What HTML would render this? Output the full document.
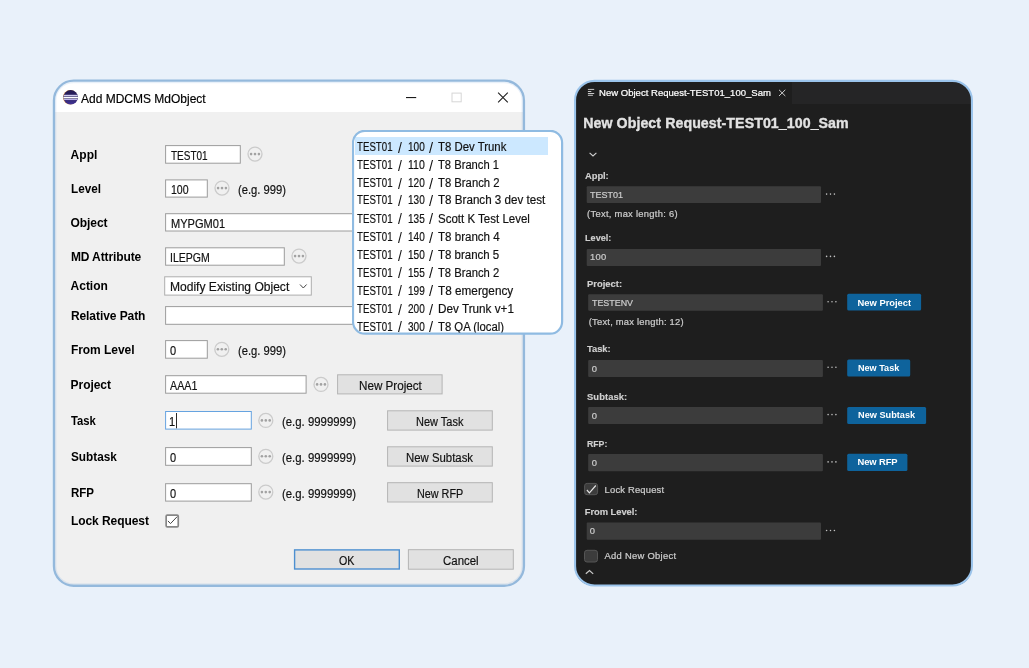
<!DOCTYPE html>
<html lang="en">
<head>
<meta charset="utf-8">
<title>Add MDCMS MdObject</title>
<style>
*{box-sizing:border-box;margin:0;padding:0}
html,body{width:1029px;height:668px;overflow:hidden;background:#e9f1fa}
body{position:relative;font-family:"Liberation Sans",sans-serif}
.layer{position:absolute;left:0;top:0;width:1029px;height:668px}
.g{will-change:opacity}
#dlg{position:absolute;left:54px;top:81px;width:470px;height:505px;border-radius:19px;background:#f0f0f0;overflow:hidden}
#dlg .tbar{position:absolute;left:0;top:0;width:100%;height:31px;background:#ffffff}
#pop{position:absolute;left:353px;top:131px;width:209px;height:203px;border-radius:11.5px;background:#ffffff;overflow:hidden}
#popf{position:absolute;left:352px;top:130px}
#popt{position:absolute;left:353px;top:131px;width:209px;height:202px;overflow:hidden}
#pop .sel{position:absolute;left:2px;top:6px;width:193px;height:18px;background:#cce8ff}
#vs{position:absolute;left:575px;top:81px;width:397px;height:505px;border-radius:19px;background:#1e1e1e;overflow:hidden}
#vs .tabs{position:absolute;left:0;top:0;width:100%;height:23px;background:#252526}
#vs .tab{position:absolute;left:0;top:0;width:217px;height:23px;background:#1e1e1e}
.x{position:absolute;white-space:pre;line-height:16px;height:16px;transform-origin:0 0}
.t{font-size:12px;font-weight:normal;color:#000000}
.lb{font-size:12px;font-weight:bold;color:#000000}
.w{font-size:12px;font-weight:normal;color:#111111}
.sl{font-size:14.6px;font-weight:normal;color:#111111}
.vt{font-size:9.5px;font-weight:normal;color:#ffffff}
.h1{font-size:14.2px;font-weight:bold;color:#e2e2e2}
.vb{font-size:9.4px;font-weight:bold;color:#d0d0d0}
.v{font-size:9.4px;font-weight:normal;color:#cccccc}
.vw{font-size:9.4px;font-weight:bold;color:#ffffff}
.w,.t{-webkit-text-stroke:0.18px currentColor}
.v,.vt{-webkit-text-stroke:0.22px currentColor}
.vb{-webkit-text-stroke:0.15px currentColor}
.h1{-webkit-text-stroke:0.35px currentColor}
</style>
</head>
<body>
<!-- left: Windows dialog -->
<div id="dlg"><div class="tbar"></div></div>
<!-- right: VS Code panel -->
<div id="vs"><div class="tabs"></div><div class="tab"></div></div>
<svg class="layer" width="1029" height="668" viewBox="0 0 1029 668">
<rect x="53.95" y="80.65" width="470.00" height="505.10" rx="19.8" fill="none" stroke="#94b9dc" stroke-width="2.3"/>
<rect x="55.70" y="82.50" width="466.50" height="501.40" rx="17.6" fill="none" stroke="rgba(140,178,225,0.2)" stroke-width="1.4"/>
<rect x="575.05" y="80.85" width="396.90" height="504.60" rx="19.5" fill="none" stroke="#9bc4eb" stroke-width="2.1"/>
<rect x="165.60" y="145.60" width="74.70" height="17.60" rx="0" fill="#ffffff" stroke="#9c9c9c" stroke-width="1" />
<rect x="165.60" y="179.90" width="41.70" height="17.20" rx="0" fill="#ffffff" stroke="#9c9c9c" stroke-width="1" />
<rect x="165.60" y="213.70" width="303.90" height="17.30" rx="0" fill="#ffffff" stroke="#9c9c9c" stroke-width="1" />
<rect x="165.60" y="247.80" width="118.70" height="17.40" rx="0" fill="#ffffff" stroke="#9c9c9c" stroke-width="1" />
<rect x="165.60" y="306.60" width="303.90" height="17.70" rx="0" fill="#ffffff" stroke="#9c9c9c" stroke-width="1" />
<rect x="165.60" y="340.60" width="41.70" height="17.60" rx="0" fill="#ffffff" stroke="#9c9c9c" stroke-width="1" />
<rect x="165.60" y="375.70" width="140.50" height="17.50" rx="0" fill="#ffffff" stroke="#9c9c9c" stroke-width="1" />
<rect x="165.60" y="447.60" width="85.70" height="17.70" rx="0" fill="#ffffff" stroke="#9c9c9c" stroke-width="1" />
<rect x="165.60" y="483.70" width="85.70" height="17.40" rx="0" fill="#ffffff" stroke="#9c9c9c" stroke-width="1" />
<rect x="164.70" y="276.80" width="146.60" height="18.30" rx="0" fill="#ffffff" stroke="#adadad" stroke-width="1" />
<rect x="165.60" y="411.50" width="85.70" height="17.60" rx="0" fill="#ffffff" stroke="#66a3e0" stroke-width="1" />
<rect x="176.05" y="413" width="0.9" height="15.3" fill="#111"/>
<path d="M300 284.5 L303.3 288 L306.6 284.5" stroke="#444" stroke-width="1" fill="none"/>
<circle cx="255" cy="154.10000000000002" r="7" fill="none" stroke="#cbcbcb" stroke-width="1.3"/>
<circle cx="251.1" cy="154.10000000000002" r="1.3" fill="#a2a2a2"/>
<circle cx="255.0" cy="154.10000000000002" r="1.3" fill="#a2a2a2"/>
<circle cx="258.9" cy="154.10000000000002" r="1.3" fill="#a2a2a2"/>
<circle cx="222" cy="188.10000000000002" r="7" fill="none" stroke="#cbcbcb" stroke-width="1.3"/>
<circle cx="218.1" cy="188.10000000000002" r="1.3" fill="#a2a2a2"/>
<circle cx="222.0" cy="188.10000000000002" r="1.3" fill="#a2a2a2"/>
<circle cx="225.9" cy="188.10000000000002" r="1.3" fill="#a2a2a2"/>
<circle cx="299" cy="256.1" r="7" fill="none" stroke="#cbcbcb" stroke-width="1.3"/>
<circle cx="295.1" cy="256.1" r="1.3" fill="#a2a2a2"/>
<circle cx="299.0" cy="256.1" r="1.3" fill="#a2a2a2"/>
<circle cx="302.9" cy="256.1" r="1.3" fill="#a2a2a2"/>
<circle cx="221.8" cy="349.3" r="7" fill="none" stroke="#cbcbcb" stroke-width="1.3"/>
<circle cx="217.9" cy="349.3" r="1.3" fill="#a2a2a2"/>
<circle cx="221.8" cy="349.3" r="1.3" fill="#a2a2a2"/>
<circle cx="225.7" cy="349.3" r="1.3" fill="#a2a2a2"/>
<circle cx="321" cy="384.40000000000003" r="7" fill="none" stroke="#cbcbcb" stroke-width="1.3"/>
<circle cx="317.1" cy="384.40000000000003" r="1.3" fill="#a2a2a2"/>
<circle cx="321.0" cy="384.40000000000003" r="1.3" fill="#a2a2a2"/>
<circle cx="324.9" cy="384.40000000000003" r="1.3" fill="#a2a2a2"/>
<circle cx="265.8" cy="420.40000000000003" r="7" fill="none" stroke="#cbcbcb" stroke-width="1.3"/>
<circle cx="261.9" cy="420.40000000000003" r="1.3" fill="#a2a2a2"/>
<circle cx="265.8" cy="420.40000000000003" r="1.3" fill="#a2a2a2"/>
<circle cx="269.7" cy="420.40000000000003" r="1.3" fill="#a2a2a2"/>
<circle cx="265.8" cy="456.3" r="7" fill="none" stroke="#cbcbcb" stroke-width="1.3"/>
<circle cx="261.9" cy="456.3" r="1.3" fill="#a2a2a2"/>
<circle cx="265.8" cy="456.3" r="1.3" fill="#a2a2a2"/>
<circle cx="269.7" cy="456.3" r="1.3" fill="#a2a2a2"/>
<circle cx="265.8" cy="492.1" r="7" fill="none" stroke="#cbcbcb" stroke-width="1.3"/>
<circle cx="261.9" cy="492.1" r="1.3" fill="#a2a2a2"/>
<circle cx="265.8" cy="492.1" r="1.3" fill="#a2a2a2"/>
<circle cx="269.7" cy="492.1" r="1.3" fill="#a2a2a2"/>
<rect x="337.60" y="374.80" width="104.50" height="19.10" rx="0" fill="#e1e1e1" stroke="#b4b4b4" stroke-width="1" />
<rect x="387.60" y="410.80" width="104.70" height="19.30" rx="0" fill="#e1e1e1" stroke="#b4b4b4" stroke-width="1" />
<rect x="387.60" y="446.80" width="104.70" height="19.30" rx="0" fill="#e1e1e1" stroke="#b4b4b4" stroke-width="1" />
<rect x="387.60" y="482.70" width="104.70" height="19.30" rx="0" fill="#e1e1e1" stroke="#b4b4b4" stroke-width="1" />
<rect x="408.40" y="549.70" width="104.90" height="19.50" rx="0" fill="#e1e1e1" stroke="#b4b4b4" stroke-width="1" />
<rect x="294.60" y="549.90" width="104.70" height="19.10" rx="0" fill="#e1e1e1" stroke="#4d8fd0" stroke-width="1.4" />
<rect x="166.15" y="515.15" width="12.10" height="11.70" rx="1.2" fill="#ffffff" stroke="#868686" stroke-width="1.7" />
<path d="M167.9 520.9 L170.5 523.6 L177.2 516.6" stroke="#444" stroke-width="1" fill="none"/>
<rect x="406" y="97" width="10.2" height="1.1" fill="#1a1a1a"/>
<rect x="452.00" y="93.10" width="9.20" height="8.70" rx="0" fill="none" stroke="#d6d6d6" stroke-width="1" />
<path d="M498.1 92.7 L507.8 102.3 M507.8 92.7 L498.1 102.3" stroke="#1a1a1a" stroke-width="1.05" fill="none"/>
<defs><linearGradient id="ecg" x1="0" y1="0" x2="0" y2="1"><stop offset="0" stop-color="#231a52"/><stop offset="0.55" stop-color="#2c2266"/><stop offset="1" stop-color="#43369a"/></linearGradient>
<clipPath id="ecc"><circle cx="70.7" cy="97.3" r="7.2"/></clipPath></defs>
<g>
<circle cx="70.2" cy="97.3" r="7.2" fill="#f0a040"/>
<circle cx="70.7" cy="97.3" r="7.2" fill="url(#ecg)"/>
<g clip-path="url(#ecc)">
<rect x="62" y="94.85" width="17" height="5.2" fill="#6a6392"/>
<rect x="62" y="94.85" width="17" height="1.15" fill="#cfcaee"/>
<rect x="62" y="96.95" width="17" height="1.25" fill="#ffffff"/>
<rect x="62" y="99" width="17" height="1.05" fill="#bbb2ea"/>
</g>
</g>
<rect x="586.70" y="186.20" width="234.30" height="16.70" rx="1" fill="#3c3c3c" />
<rect x="586.70" y="249.00" width="234.30" height="17.00" rx="1" fill="#3c3c3c" />
<rect x="588.20" y="294.30" width="234.70" height="16.50" rx="1" fill="#3c3c3c" />
<rect x="588.20" y="359.90" width="234.70" height="17.10" rx="1" fill="#3c3c3c" />
<rect x="588.20" y="407.10" width="234.70" height="16.90" rx="1" fill="#3c3c3c" />
<rect x="588.20" y="454.10" width="234.70" height="17.10" rx="1" fill="#3c3c3c" />
<rect x="586.70" y="522.60" width="234.30" height="17.20" rx="1" fill="#3c3c3c" />
<circle cx="826.60" cy="194.1" r="0.78" fill="#c2c2c2"/>
<circle cx="830.50" cy="194.1" r="0.78" fill="#c2c2c2"/>
<circle cx="834.40" cy="194.1" r="0.78" fill="#c2c2c2"/>
<circle cx="826.60" cy="256.4" r="0.78" fill="#c2c2c2"/>
<circle cx="830.50" cy="256.4" r="0.78" fill="#c2c2c2"/>
<circle cx="834.40" cy="256.4" r="0.78" fill="#c2c2c2"/>
<circle cx="828.10" cy="301.8" r="0.78" fill="#c2c2c2"/>
<circle cx="832.00" cy="301.8" r="0.78" fill="#c2c2c2"/>
<circle cx="835.90" cy="301.8" r="0.78" fill="#c2c2c2"/>
<circle cx="828.10" cy="367.2" r="0.78" fill="#c2c2c2"/>
<circle cx="832.00" cy="367.2" r="0.78" fill="#c2c2c2"/>
<circle cx="835.90" cy="367.2" r="0.78" fill="#c2c2c2"/>
<circle cx="828.10" cy="414.6" r="0.78" fill="#c2c2c2"/>
<circle cx="832.00" cy="414.6" r="0.78" fill="#c2c2c2"/>
<circle cx="835.90" cy="414.6" r="0.78" fill="#c2c2c2"/>
<circle cx="828.10" cy="461.9" r="0.78" fill="#c2c2c2"/>
<circle cx="832.00" cy="461.9" r="0.78" fill="#c2c2c2"/>
<circle cx="835.90" cy="461.9" r="0.78" fill="#c2c2c2"/>
<circle cx="826.60" cy="530.5" r="0.78" fill="#c2c2c2"/>
<circle cx="830.50" cy="530.5" r="0.78" fill="#c2c2c2"/>
<circle cx="834.40" cy="530.5" r="0.78" fill="#c2c2c2"/>
<rect x="847.20" y="293.70" width="73.90" height="16.70" rx="1.5" fill="#0e639c" />
<rect x="847.20" y="359.40" width="63.00" height="17.10" rx="1.5" fill="#0e639c" />
<rect x="847.20" y="407.00" width="78.90" height="17.10" rx="1.5" fill="#0e639c" />
<rect x="847.20" y="453.80" width="60.20" height="17.20" rx="1.5" fill="#0e639c" />
<rect x="584.60" y="483.40" width="13.00" height="11.30" rx="2.5" fill="#3c3c3c" stroke="#555555" stroke-width="1" />
<path d="M586.9 490 L589.4 492.8 L595.8 485.5" stroke="#e4e4e4" stroke-width="1.15" fill="none"/>
<rect x="584.50" y="550.30" width="13.00" height="11.70" rx="2.5" fill="#3c3c3c" stroke="#555555" stroke-width="1" />
<path d="M589.6 152.8 L593 156 L596.4 152.8" stroke="#d0d0d0" stroke-width="1.15" fill="none"/>
<path d="M585.8 573.7 L589.5 570.5 L593.2 573.9" stroke="#c8c8c8" stroke-width="1.25" fill="none"/>
<rect x="587.9" y="88.90" width="6.30" height="1" fill="#c5c5c5"/>
<rect x="587.9" y="91.00" width="3.40" height="1" fill="#c5c5c5"/>
<rect x="587.9" y="93.00" width="6.30" height="1" fill="#c5c5c5"/>
<rect x="587.9" y="94.80" width="5.00" height="1" fill="#c5c5c5"/>
<path d="M779 89.8 L785.3 96 M785.3 89.8 L779 96" stroke="#d4d4d4" stroke-width="0.95" fill="none"/>
</svg>
<div class="layer g">
<span class="x t" style="left:80.70px;top:91.00px;transform:scaleX(0.9995)">Add MDCMS MdObject</span>
<span class="x lb" style="left:70.60px;top:147.00px;letter-spacing:0.025px">Appl</span>
<span class="x lb" style="left:70.90px;top:181.00px;transform:scaleX(0.9752)">Level</span>
<span class="x lb" style="left:70.60px;top:215.00px;letter-spacing:-0.089px">Object</span>
<span class="x lb" style="left:70.90px;top:249.00px;letter-spacing:-0.110px">MD Attribute</span>
<span class="x lb" style="left:70.60px;top:278.00px;letter-spacing:-0.020px">Action</span>
<span class="x lb" style="left:70.90px;top:308.00px;letter-spacing:-0.069px">Relative Path</span>
<span class="x lb" style="left:70.90px;top:342.00px;letter-spacing:-0.043px">From Level</span>
<span class="x lb" style="left:70.60px;top:377.00px;letter-spacing:-0.048px">Project</span>
<span class="x lb" style="left:71.20px;top:413.00px;transform:scaleX(0.9370)">Task</span>
<span class="x lb" style="left:70.60px;top:449.00px;transform:scaleX(0.9828)">Subtask</span>
<span class="x lb" style="left:70.90px;top:485.00px;transform:scaleX(0.9585)">RFP</span>
<span class="x lb" style="left:70.90px;top:513.00px;letter-spacing:-0.054px">Lock Request</span>
<span class="x w" style="left:170.60px;top:148.00px;transform:scaleX(0.8322)">TEST01</span>
<span class="x w" style="left:171.20px;top:182.00px;transform:scaleX(0.8797)">100</span>
<span class="x w" style="left:170.60px;top:216.00px;transform:scaleX(0.9219)">MYPGM01</span>
<span class="x w" style="left:169.72px;top:250.00px;transform:scaleX(0.8771)">ILEPGM</span>
<span class="x w" style="left:169.60px;top:279.00px;transform:scaleX(1.0044)">Modify Existing Object</span>
<span class="x w" style="left:169.83px;top:343.00px;transform:scaleX(0.9200)">0</span>
<span class="x w" style="left:170.10px;top:378.00px;transform:scaleX(0.8932)">AAA1</span>
<span class="x w" style="left:169.48px;top:414.00px;transform:scaleX(0.9200)">1</span>
<span class="x w" style="left:169.83px;top:450.00px;transform:scaleX(0.9200)">0</span>
<span class="x w" style="left:169.83px;top:486.00px;transform:scaleX(0.9200)">0</span>
<span class="x w" style="left:237.80px;top:182.00px;transform:scaleX(0.9344)">(e.g. 999)</span>
<span class="x w" style="left:237.80px;top:343.00px;transform:scaleX(0.9344)">(e.g. 999)</span>
<span class="x w" style="left:282.00px;top:414.00px;transform:scaleX(0.9480)">(e.g. 9999999)</span>
<span class="x w" style="left:282.00px;top:450.00px;transform:scaleX(0.9480)">(e.g. 9999999)</span>
<span class="x w" style="left:282.00px;top:486.00px;transform:scaleX(0.9480)">(e.g. 9999999)</span>
<span class="x w" style="left:358.60px;top:378.00px;transform:scaleX(0.9716)">New Project</span>
<span class="x w" style="left:415.60px;top:414.00px;transform:scaleX(0.9149)">New Task</span>
<span class="x w" style="left:406.20px;top:450.00px;transform:scaleX(0.9484)">New Subtask</span>
<span class="x w" style="left:417.00px;top:486.00px;transform:scaleX(0.9000)">New RFP</span>
<span class="x w" style="left:339.10px;top:553.00px;transform:scaleX(0.8884)">OK</span>
<span class="x w" style="left:443.10px;top:553.00px;transform:scaleX(0.9540)">Cancel</span>
<span class="x vt" style="left:599.00px;top:84.50px;letter-spacing:0.026px">New Object Request-TEST01_100_Sam</span>
<span class="x h1" style="left:583.20px;top:115.00px;letter-spacing:0.067px">New Object Request-TEST01_100_Sam</span>
<span class="x vb" style="left:585.10px;top:167.50px;letter-spacing:-0.107px">Appl:</span>
<span class="x v" style="left:590.10px;top:186.50px;transform:scaleX(0.9598)">TEST01</span>
<span class="x v" style="left:587.10px;top:205.50px;letter-spacing:0.275px">(Text, max length: 6)</span>
<span class="x vb" style="left:585.10px;top:229.50px;transform:scaleX(0.9713)">Level:</span>
<span class="x v" style="left:590.10px;top:248.50px;letter-spacing:0.286px">100</span>
<span class="x vb" style="left:587.00px;top:275.50px;letter-spacing:0.031px">Project:</span>
<span class="x v" style="left:592.10px;top:294.50px;transform:scaleX(0.9481)">TESTENV</span>
<span class="x v" style="left:588.70px;top:313.50px;letter-spacing:0.228px">(Text, max length: 12)</span>
<span class="x vb" style="left:587.10px;top:340.50px;letter-spacing:-0.068px">Task:</span>
<span class="x v" style="left:591.80px;top:360.50px;letter-spacing:0.000px">0</span>
<span class="x vb" style="left:587.00px;top:388.50px;letter-spacing:0.090px">Subtask:</span>
<span class="x v" style="left:591.80px;top:407.50px;letter-spacing:0.000px">0</span>
<span class="x vb" style="left:587.00px;top:435.50px;transform:scaleX(0.9287)">RFP:</span>
<span class="x v" style="left:591.80px;top:454.50px;letter-spacing:0.000px">0</span>
<span class="x v" style="left:604.60px;top:481.50px;letter-spacing:0.198px">Lock Request</span>
<span class="x vb" style="left:584.80px;top:503.50px;letter-spacing:-0.052px">From Level:</span>
<span class="x v" style="left:589.80px;top:522.50px;letter-spacing:0.000px">0</span>
<span class="x v" style="left:604.50px;top:547.50px;letter-spacing:0.290px">Add New Object</span>
<span class="x vw" style="left:857.60px;top:294.50px;letter-spacing:-0.014px">New Project</span>
<span class="x vw" style="left:857.60px;top:359.50px;transform:scaleX(0.9691)">New Task</span>
<span class="x vw" style="left:857.60px;top:406.50px;transform:scaleX(0.9791)">New Subtask</span>
<span class="x vw" style="left:857.60px;top:453.50px;letter-spacing:-0.113px">New RFP</span>
</div>
<!-- popup list -->
<div id="pop"><div class="sel"></div></div>
<div id="popt" class="g">
<div><span class="x w" style="left:3.60px;top:8.00px;transform:scaleX(0.8074)">TEST01 </span><span class="x sl" style="left:44.80px;top:9.00px;transform:scaleX(0.9600)">/ </span><span class="x w" style="left:54.50px;top:8.00px;transform:scaleX(0.8355)">100 </span><span class="x sl" style="left:75.90px;top:9.00px;transform:scaleX(1.0000)">/ </span><span class="x w" style="left:84.70px;top:8.00px;transform:scaleX(0.9489)">T8 Dev Trunk</span></div>
<div><span class="x w" style="left:3.60px;top:26.00px;transform:scaleX(0.8074)">TEST01 </span><span class="x sl" style="left:44.80px;top:27.00px;transform:scaleX(0.9600)">/ </span><span class="x w" style="left:54.50px;top:26.00px;transform:scaleX(0.8737)">110 </span><span class="x sl" style="left:75.90px;top:27.00px;transform:scaleX(1.0000)">/ </span><span class="x w" style="left:84.70px;top:26.00px;transform:scaleX(0.9331)">T8 Branch 1</span></div>
<div><span class="x w" style="left:3.60px;top:44.00px;transform:scaleX(0.8074)">TEST01 </span><span class="x sl" style="left:44.80px;top:45.00px;transform:scaleX(0.9600)">/ </span><span class="x w" style="left:54.50px;top:44.00px;transform:scaleX(0.8355)">120 </span><span class="x sl" style="left:75.90px;top:45.00px;transform:scaleX(1.0000)">/ </span><span class="x w" style="left:84.70px;top:44.00px;transform:scaleX(0.9407)">T8 Branch 2</span></div>
<div><span class="x w" style="left:3.60px;top:61.00px;transform:scaleX(0.8074)">TEST01 </span><span class="x sl" style="left:44.80px;top:62.00px;transform:scaleX(0.9600)">/ </span><span class="x w" style="left:54.50px;top:61.00px;transform:scaleX(0.8355)">130 </span><span class="x sl" style="left:75.90px;top:62.00px;transform:scaleX(1.0000)">/ </span><span class="x w" style="left:84.70px;top:61.00px;transform:scaleX(0.9687)">T8 Branch 3 dev test</span></div>
<div><span class="x w" style="left:3.60px;top:80.00px;transform:scaleX(0.8074)">TEST01 </span><span class="x sl" style="left:44.80px;top:80.00px;transform:scaleX(0.9600)">/ </span><span class="x w" style="left:54.50px;top:80.00px;transform:scaleX(0.8355)">135 </span><span class="x sl" style="left:75.90px;top:80.00px;transform:scaleX(1.0000)">/ </span><span class="x w" style="left:84.70px;top:80.00px;transform:scaleX(0.9593)">Scott K Test Level</span></div>
<div><span class="x w" style="left:3.60px;top:98.00px;transform:scaleX(0.8074)">TEST01 </span><span class="x sl" style="left:44.80px;top:99.00px;transform:scaleX(0.9600)">/ </span><span class="x w" style="left:54.50px;top:98.00px;transform:scaleX(0.8355)">140 </span><span class="x sl" style="left:75.90px;top:99.00px;transform:scaleX(1.0000)">/ </span><span class="x w" style="left:84.70px;top:98.00px;transform:scaleX(0.9633)">T8 branch 4</span></div>
<div><span class="x w" style="left:3.60px;top:116.00px;transform:scaleX(0.8074)">TEST01 </span><span class="x sl" style="left:44.80px;top:117.00px;transform:scaleX(0.9600)">/ </span><span class="x w" style="left:54.50px;top:116.00px;transform:scaleX(0.8355)">150 </span><span class="x sl" style="left:75.90px;top:117.00px;transform:scaleX(1.0000)">/ </span><span class="x w" style="left:84.70px;top:116.00px;transform:scaleX(0.9555)">T8 branch 5</span></div>
<div><span class="x w" style="left:3.60px;top:134.00px;transform:scaleX(0.8074)">TEST01 </span><span class="x sl" style="left:44.80px;top:134.00px;transform:scaleX(0.9600)">/ </span><span class="x w" style="left:54.50px;top:134.00px;transform:scaleX(0.8355)">155 </span><span class="x sl" style="left:75.90px;top:134.00px;transform:scaleX(1.0000)">/ </span><span class="x w" style="left:84.70px;top:134.00px;transform:scaleX(0.9362)">T8 Branch 2</span></div>
<div><span class="x w" style="left:3.60px;top:152.00px;transform:scaleX(0.8074)">TEST01 </span><span class="x sl" style="left:44.80px;top:152.00px;transform:scaleX(0.9600)">/ </span><span class="x w" style="left:54.50px;top:152.00px;transform:scaleX(0.8355)">199 </span><span class="x sl" style="left:75.90px;top:152.00px;transform:scaleX(1.0000)">/ </span><span class="x w" style="left:84.70px;top:152.00px;transform:scaleX(0.9805)">T8 emergency</span></div>
<div><span class="x w" style="left:3.60px;top:170.00px;transform:scaleX(0.8074)">TEST01 </span><span class="x sl" style="left:44.80px;top:171.00px;transform:scaleX(0.9600)">/ </span><span class="x w" style="left:54.50px;top:170.00px;transform:scaleX(0.8355)">200 </span><span class="x sl" style="left:75.90px;top:171.00px;transform:scaleX(1.0000)">/ </span><span class="x w" style="left:84.70px;top:170.00px;transform:scaleX(0.9777)">Dev Trunk v+1</span></div>
<div><span class="x w" style="left:3.60px;top:188.00px;transform:scaleX(0.8074)">TEST01 </span><span class="x sl" style="left:44.80px;top:188.00px;transform:scaleX(0.9600)">/ </span><span class="x w" style="left:54.50px;top:188.00px;transform:scaleX(0.8355)">300 </span><span class="x sl" style="left:75.90px;top:188.00px;transform:scaleX(1.0000)">/ </span><span class="x w" style="left:84.70px;top:188.00px;transform:scaleX(0.9436)">T8 QA (local)</span></div>
</div>
<svg id="popf" width="212" height="206" viewBox="0 0 212 206"><rect x="1.00" y="0.80" width="209.10" height="202.90" rx="12" fill="none" stroke="#8fbbe2" stroke-width="2.2"/></svg>
</body>
</html>
